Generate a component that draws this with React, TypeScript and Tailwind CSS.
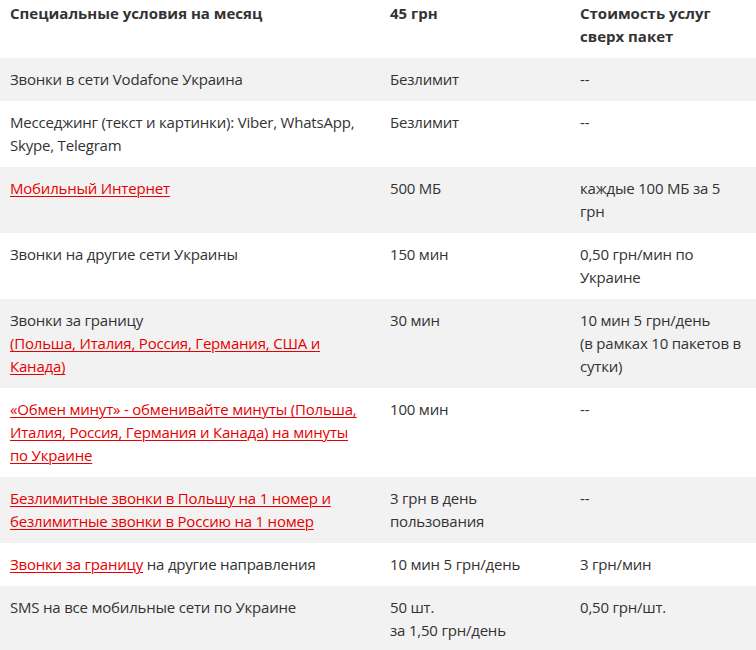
import React from 'react';

type Cell = React.ReactNode;

const A = ({ children }: { children: React.ReactNode }) => (
  <a href="#" className="text-[#e60000] underline decoration-1 underline-offset-2">
    {children}
  </a>
);

const rows: [Cell, Cell, Cell][] = [
  ['Звонки в сети Vodafone Украина', 'Безлимит', '--'],
  ['Месседжинг (текст и картинки): Viber, WhatsApp, Skype, Telegram', 'Безлимит', '--'],
  [<A>Мобильный Интернет</A>, '500 МБ', 'каждые 100 МБ за 5 грн'],
  ['Звонки на другие сети Украины', '150 мин', '0,50 грн/мин по Украине'],
  [
    <>
      Звонки за границу
      <br />
      <A>(Польша, Италия, Россия, Германия, США и Канада)</A>
    </>,
    '30 мин',
    <>
      10 мин 5 грн/день
      <br />
      (в рамках 10 пакетов в сутки)
    </>,
  ],
  [
    <A>
      «Обмен минут» - обменивайте минуты (Польша, Италия, Россия, Германия и Канада) на минуты
      <br />
      по Украине
    </A>,
    '100 мин',
    '--',
  ],
  [
    <A>Безлимитные звонки в Польшу на 1 номер и безлимитные звонки в Россию на 1 номер</A>,
    '3 грн в день пользования',
    '--',
  ],
  [
    <>
      <A>Звонки за границу</A> на другие направления
    </>,
    '10 мин 5 грн/день',
    '3 грн/мин',
  ],
  [
    'SMS на все мобильные сети по Украине',
    <>
      50 шт.
      <br />
      за 1,50 грн/день
    </>,
    '0,50 грн/шт.',
  ],
];

export default function App() {
  return (
    <div className="w-[756px] h-[650px] overflow-hidden bg-white font-['Open_Sans',sans-serif] text-[15px] leading-[23px] text-[#333]">
      <table className="w-full table-fixed border-collapse">
        <colgroup>
          <col className="w-[380px]" />
          <col className="w-[190px]" />
          <col className="w-[186px]" />
        </colgroup>
        <thead>
          <tr className="font-bold text-left align-top">
            <th className="px-[10px] pt-[2px] pb-[10px]">Специальные условия на месяц</th>
            <th className="px-[10px] pt-[2px] pb-[10px]">45 грн</th>
            <th className="px-[10px] pt-[2px] pb-[10px]">Стоимость услуг сверх пакет</th>
          </tr>
        </thead>
        <tbody className="tracking-[-0.2px]">
          {rows.map((r, i) => (
            <tr key={i} className={`align-top ${i % 2 === 0 ? 'bg-[#f2f2f2]' : 'bg-white'}`}>
              {r.map((c, j) => (
                <td key={j} className="px-[10px] py-[10px]">
                  {c}
                </td>
              ))}
            </tr>
          ))}
        </tbody>
      </table>
    </div>
  );
}
